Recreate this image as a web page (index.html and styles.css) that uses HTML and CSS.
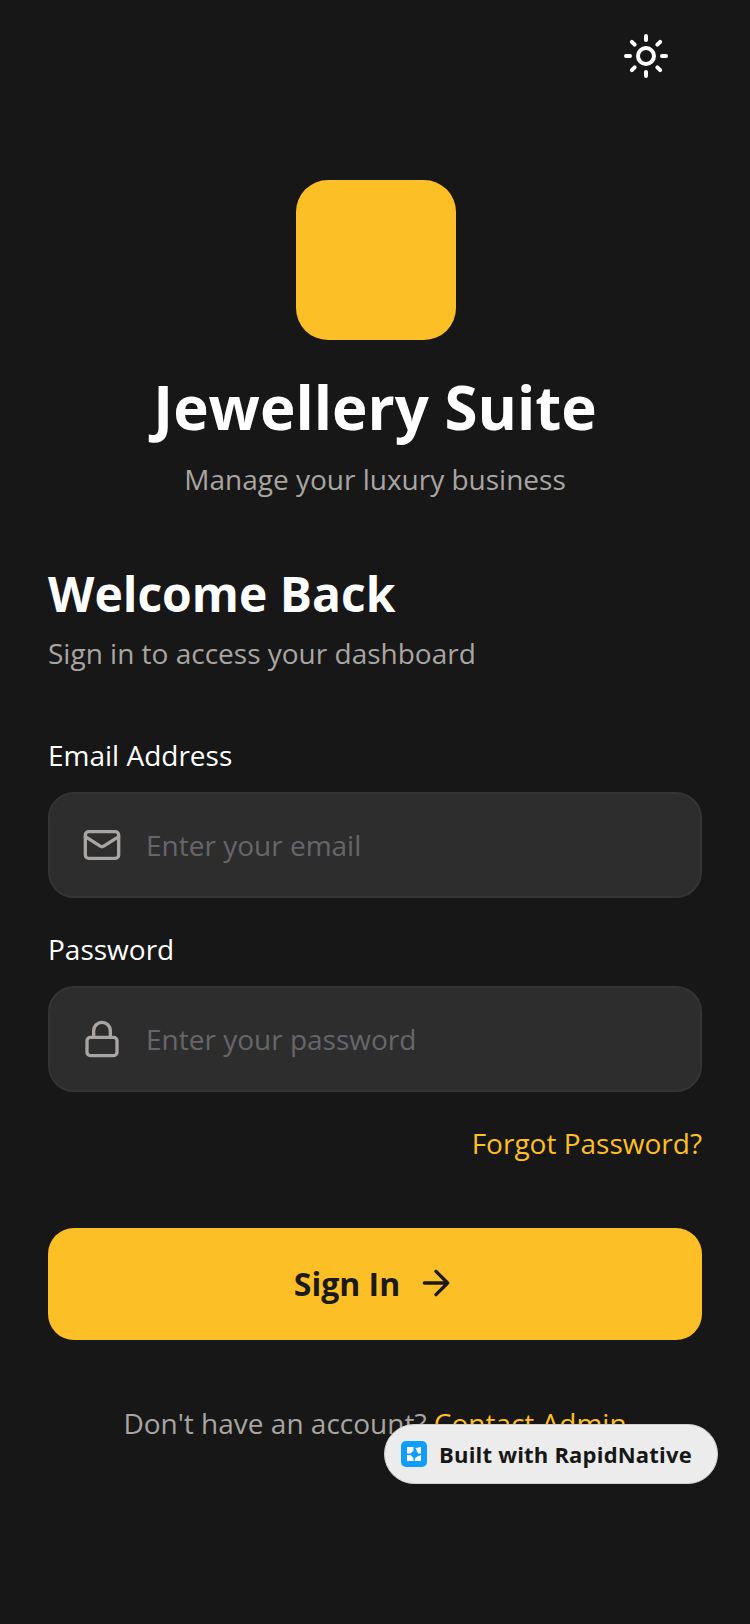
FILE: index.html
```html
<!DOCTYPE html>
<html lang="en">
<head>
  <meta charset="UTF-8">
  <meta name="viewport" content="width=device-width, initial-scale=1.0">
  <title>Jewellery Suite</title>
  <link rel="stylesheet" href="styles.css">
</head>
<body>
  <div class="screen">
    <div class="top-bar">
      <svg class="theme-icon" viewBox="0 0 24 24" fill="none" stroke="#fff" stroke-width="2" stroke-linecap="round">
        <circle cx="12" cy="12" r="4"/>
        <path d="M12 2v2M12 20v2M4.93 4.93l1.41 1.41M17.66 17.66l1.41 1.41M2 12h2M20 12h2M6.34 17.66l-1.41 1.41M19.07 4.93l-1.41 1.41"/>
      </svg>
    </div>

    <div class="brand">
      <div class="logo"></div>
      <h1>Jewellery Suite</h1>
      <p class="tagline">Manage your luxury business</p>
    </div>

    <h2>Welcome Back</h2>
    <p class="intro">Sign in to access your dashboard</p>

    <form class="form">
      <label class="label" for="email-input">Email Address</label>
      <div class="field">
        <svg class="field-icon" viewBox="0 0 24 24" fill="none" stroke="#a8a5a2" stroke-width="2" stroke-linecap="round" stroke-linejoin="round">
          <rect x="2" y="4" width="20" height="16" rx="2"/>
          <path d="M22 7l-8.970 5.700a1.940 1.940 0 0 1-2.060 0L2 7"/>
        </svg>
        <input type="text" id="email-input" placeholder="Enter your email">
      </div>

      <label class="label" for="password-input">Password</label>
      <div class="field">
        <svg class="field-icon" viewBox="0 0 24 24" fill="none" stroke="#a8a5a2" stroke-width="2" stroke-linecap="round" stroke-linejoin="round">
          <rect x="3" y="11" width="18" height="11" rx="2"/>
          <path d="M7 11V7a5 5 0 0 1 10 0v4"/>
        </svg>
        <input type="password" id="password-input" placeholder="Enter your password">
      </div>

      <a class="forgot" href="#">Forgot Password?</a>

      <button class="sign-in" type="button">
        Sign In
        <svg class="arrow" viewBox="0 0 24 24" fill="none" stroke="#1a1a1a" stroke-width="2" stroke-linecap="round" stroke-linejoin="round">
          <path d="M5 12h14M12 5l7 7-7 7"/>
        </svg>
      </button>
    </form>

    <p class="signup">Don't have an account? <a href="#">Contact Admin</a></p>
  </div>

  <div class="built-badge">
    <svg class="badge-logo" viewBox="0 0 26 26">
      <rect width="26" height="26" rx="5" fill="#0f9dff"/>
      <path d="M6 6h6.500v3.500L9.500 12.500H6zM14.500 7l5.500-1v6.500h-3zM6 14h3.500l3 3V20H6zM20 14v6h-6.500l1-3.500z" fill="#fff"/>
    </svg>
    <span>Built with RapidNative</span>
  </div>
</body>
</html>
```

FILE: styles.css
```css
* {
  box-sizing: border-box;
}

body {
  margin: 0;
  background-color: #171717;
  color: #fff;
  font-family: "Open Sans", sans-serif;
}

.screen {
  min-height: 1624px;
  padding: 32px 48px 0;
}

.top-bar {
  display: flex;
  justify-content: flex-end;
  padding-right: 32px;
}

.theme-icon {
  width: 48px;
  height: 48px;
}

.brand {
  display: flex;
  flex-direction: column;
  align-items: center;
  margin-top: 100px;
}

.logo {
  width: 160px;
  height: 160px;
  margin-left: 1px;
  border-radius: 32px;
  background-color: #fdbf26;
}

h1 {
  margin: 31px 0 0;
  font-size: 60px;
  line-height: 72px;
  font-weight: 700;
}

.tagline {
  margin: 16px 0 0;
  font-size: 28px;
  line-height: 40px;
  color: #a8a5a2;
}

h2 {
  margin: 63px 0 0;
  font-size: 48px;
  line-height: 64px;
  font-weight: 700;
}

.intro {
  margin: 7px 0 0;
  font-size: 28px;
  line-height: 40px;
  color: #a8a5a2;
}

.form {
  display: flex;
  flex-direction: column;
  margin-top: 62px;
}

.label {
  font-size: 28px;
  line-height: 40px;
  margin-bottom: 17px;
}

.field {
  display: flex;
  align-items: center;
  height: 106px;
  margin-bottom: 31px;
  padding: 0 32px;
  border: 2px solid #343434;
  border-radius: 26px;
  background-color: #2d2d2d;
}

.field-icon {
  width: 40px;
  height: 40px;
  flex-shrink: 0;
}

.field input {
  flex: 1;
  min-width: 0;
  margin-left: 24px;
  padding: 0;
  border: none;
  outline: none;
  background: transparent;
  color: #fff;
  font-family: inherit;
  font-size: 28px;
}

.field input::placeholder {
  color: #66666a;
  opacity: 1;
}

.forgot {
  align-self: flex-end;
  font-size: 28px;
  line-height: 40px;
  color: #fdbf26;
  text-decoration: none;
}

.sign-in {
  display: flex;
  align-items: center;
  justify-content: center;
  gap: 16px;
  height: 112px;
  margin-top: 65px;
  padding: 0 0 2px;
  border: none;
  border-radius: 26px;
  background-color: #fdbf26;
  color: #1a1a1a;
  font-family: inherit;
  font-size: 32px;
  font-weight: 700;
}

.arrow {
  width: 40px;
  height: 40px;
}

.signup {
  margin: 63px 0 0;
  text-align: center;
  font-size: 28px;
  line-height: 40px;
  color: #a8a5a2;
}

.signup a {
  color: #fdbf26;
  text-decoration: none;
}

.built-badge {
  position: fixed;
  left: 384px;
  top: 1424px;
  display: flex;
  align-items: center;
  gap: 12px;
  width: 334px;
  height: 60px;
  padding: 0 16px;
  border: 1px solid #d0d0d0;
  border-radius: 30px;
  background-color: #ececec;
  color: #171717;
  font-size: 22px;
  font-weight: 700;
  letter-spacing: 0.200px;
  white-space: nowrap;
}

.badge-logo {
  width: 26px;
  height: 26px;
  flex-shrink: 0;
}
```
